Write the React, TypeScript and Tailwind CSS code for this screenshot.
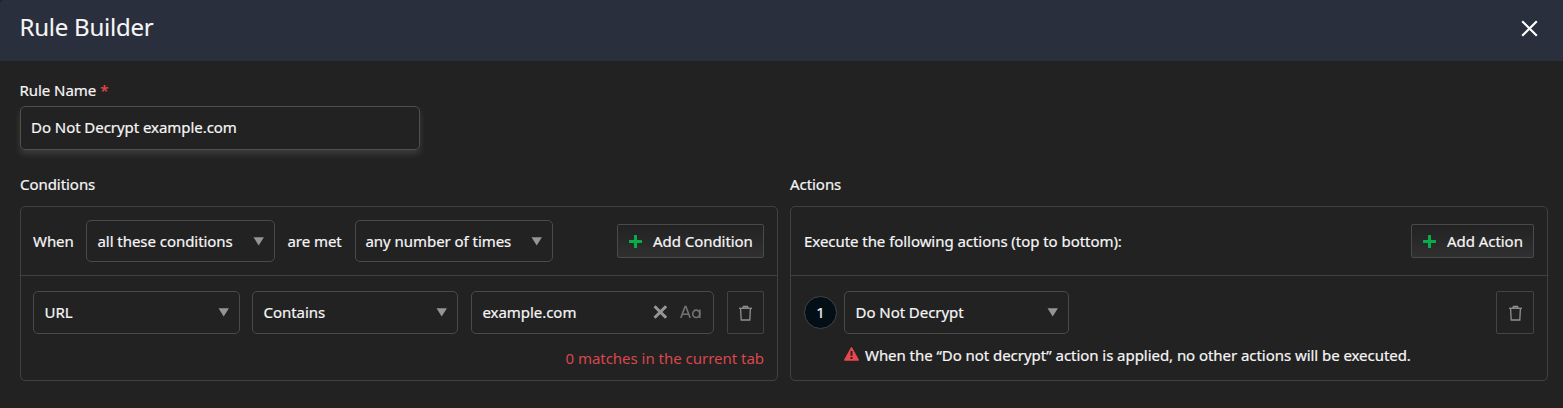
import React from "react";

function Select({ label, className }: { label: string; className: string }) {
  return (
    <button
      className={`flex shrink-0 items-center justify-between rounded-[5px] border border-[#4a4a4a] pr-[10px] pl-[10.500px] text-left ${className}`}
    >
      <span>{label}</span>
      <svg width="11" height="9" viewBox="0 0 11 9" fill="#959595">
        <path d="M0.5 0.3h10.4L5.7 8.5z" />
      </svg>
    </button>
  );
}

function AddButton({ label, className }: { label: string; className: string }) {
  return (
    <button
      className={`flex h-[34px] items-center rounded-[2px] border border-[#4a4a4a] bg-linear-to-b from-[#222222] to-[#303030] pl-[11px] ${className}`}
    >
      <svg width="13" height="13" viewBox="0 0 13 13" className="mr-[11px]" fill="#08ac4b">
        <path d="M5.5 0h2q.5 0 .5.5V5h4.5q.5 0 .5.5v2q0 .5-.5.5H8v4.5q0 .5-.5.5h-2q-.5 0-.5-.5V8H.5Q0 8 0 7.500v-2Q0 5 .5 5H5V.5q0-.5.5-.5z" />
      </svg>
      <span>{label}</span>
    </button>
  );
}

function TrashButton({ className }: { className: string }) {
  return (
    <button
      aria-label="Delete"
      className={`flex h-[43px] shrink-0 items-center justify-center rounded-[2px] border border-[#444444] ${className}`}
    >
      <svg width="13" height="16" viewBox="0 0 13 16" className="mt-px" fill="none" stroke="#909090" strokeWidth="1.3">
        <path d="M0 3.300h13" />
        <path d="M3.800 2.900L4.500 1.300h4l.7 1.600" fill="#707070" />
        <path d="M1.600 3.800l.6 11.200h8.600l.6-11.200" />
      </svg>
    </button>
  );
}

export default function App() {
  return (
    <div className="h-[408px] w-[1563px] overflow-hidden bg-[#222222] font-['Noto_Sans','Open_Sans',sans-serif] text-[15px] leading-5 tracking-[-0.05px] text-[#f6f6f6] [-webkit-text-stroke:0.2px]">
      <header className="flex h-[61px] items-center justify-between rounded-tl-[4px] bg-[#2a2f3d] pr-[25px] pb-[8px] pl-[19.500px]">
        <h1 className="text-[24px] leading-8 tracking-[-0.23px] [-webkit-text-stroke:0.1px]">Rule Builder</h1>
        <button aria-label="Close" className="mt-[3px]">
          <svg width="17" height="17" viewBox="0 0 17 17" fill="none" stroke="#ffffff" strokeWidth="2.200">
            <path d="M1.200 1.200l14.600 14.600M15.800 1.200L1.200 15.800" />
          </svg>
        </button>
      </header>
      <main className="pl-5">
        <label className="-ml-[0.5px] flex h-[45px] pt-[19px]">
          Rule Name<span className="ml-1 text-[#e5484d]">*</span>
        </label>
        <div className="flex h-[44px] w-[400px] items-center rounded-[5px] border border-[#4f4f4f] pb-[3px] pl-[10px] shadow-[0_4px_6px_rgba(255,255,255,0.12)]">
          Do Not Decrypt example.com
        </div>
        <div className="mt-6 flex gap-3">
          <section className="w-[758px]">
            <h2 className="mb-3">Conditions</h2>
            <div className="h-[175px] rounded-[5px] border border-[#414141]">
              <div className="flex h-[69px] items-center border-b border-[#414141] pr-[13px] pl-3">
                <span className="w-[53px]">When</span>
                <Select label="all these conditions" className="h-[42px] w-[189px]" />
                <span className="ml-[12.500px] w-[67.500px]">are met</span>
                <Select label="any number of times" className="h-[42px] w-[198px] pl-[9.500px]!" />
                <AddButton label="Add Condition" className="ml-auto w-[147px]" />
              </div>
              <div className="flex pt-[15px] pr-[13px] pl-3">
                <Select label="URL" className="h-[43px] w-[207px] pb-px" />
                <Select label="Contains" className="ml-3 h-[43px] w-[206px] pb-px" />
                <div className="ml-[13px] flex h-[43px] w-[243px] items-center rounded-[5px] border border-[#4a4a4a] pr-[11px] pb-px pl-[10.500px]">
                  <span className="grow">example.com</span>
                  <svg width="14" height="14" viewBox="0 0 14 14" fill="none" stroke="#969696" strokeWidth="3">
                    <path d="M1.500 1.200l11.600 11.600M13.100 1.200L1.500 12.800" />
                  </svg>
                  <svg width="22" height="14" viewBox="0 0 22 14" className="ml-[13px]" fill="none" stroke="#737373" strokeWidth="1.600">
                    <path d="M.8 13L5.100 1.500h.8L10.200 13M2.300 9.300h6.400" />
                    <ellipse cx="16.200" cy="8.800" rx="3.500" ry="3.700" />
                    <path d="M19.800 4.500V13" />
                  </svg>
                </div>
                <TrashButton className="ml-[13px] w-[37px]" />
              </div>
              <p className="mt-[14px] pr-[13px] text-right tracking-[-0.02px] text-[#dc464c] [-webkit-text-stroke:0]">
                0 matches in the current tab
              </p>
            </div>
          </section>
          <section className="w-[758px]">
            <h2 className="mb-3">Actions</h2>
            <div className="h-[175px] rounded-[5px] border border-[#414141]">
              <div className="flex h-[69px] items-center justify-between border-b border-[#414141] px-[13px]">
                <span>Execute the following actions (top to bottom):</span>
                <AddButton label="Add Action" className="w-[123px]" />
              </div>
              <div className="flex items-center pt-[15px] pr-[13px] pl-[13px]">
                <span className="mr-[7px] flex size-[33px] items-center justify-center rounded-full border border-[#444444] bg-[#020f17] pb-px">
                  1
                </span>
                <Select label="Do Not Decrypt" className="h-[43px] w-[225px] pb-px" />
                <TrashButton className="ml-auto w-[38px]" />
              </div>
              <div className="mt-[11px] ml-[53px] flex items-center">
                <svg width="15" height="14" viewBox="0 0 15 14" className="-mt-[3px] mr-[6px]">
                  <path d="M7.500.8L14.300 13H.7z" fill="#e5484d" stroke="#e5484d" strokeWidth="1.400" strokeLinejoin="round" />
                  <path d="M7.500 4v4.800M7.500 10v2" stroke="#332022" strokeWidth="2" />
                </svg>
                <span>When the “Do not decrypt” action is applied, no other actions will be executed.</span>
              </div>
            </div>
          </section>
        </div>
      </main>
    </div>
  );
}
